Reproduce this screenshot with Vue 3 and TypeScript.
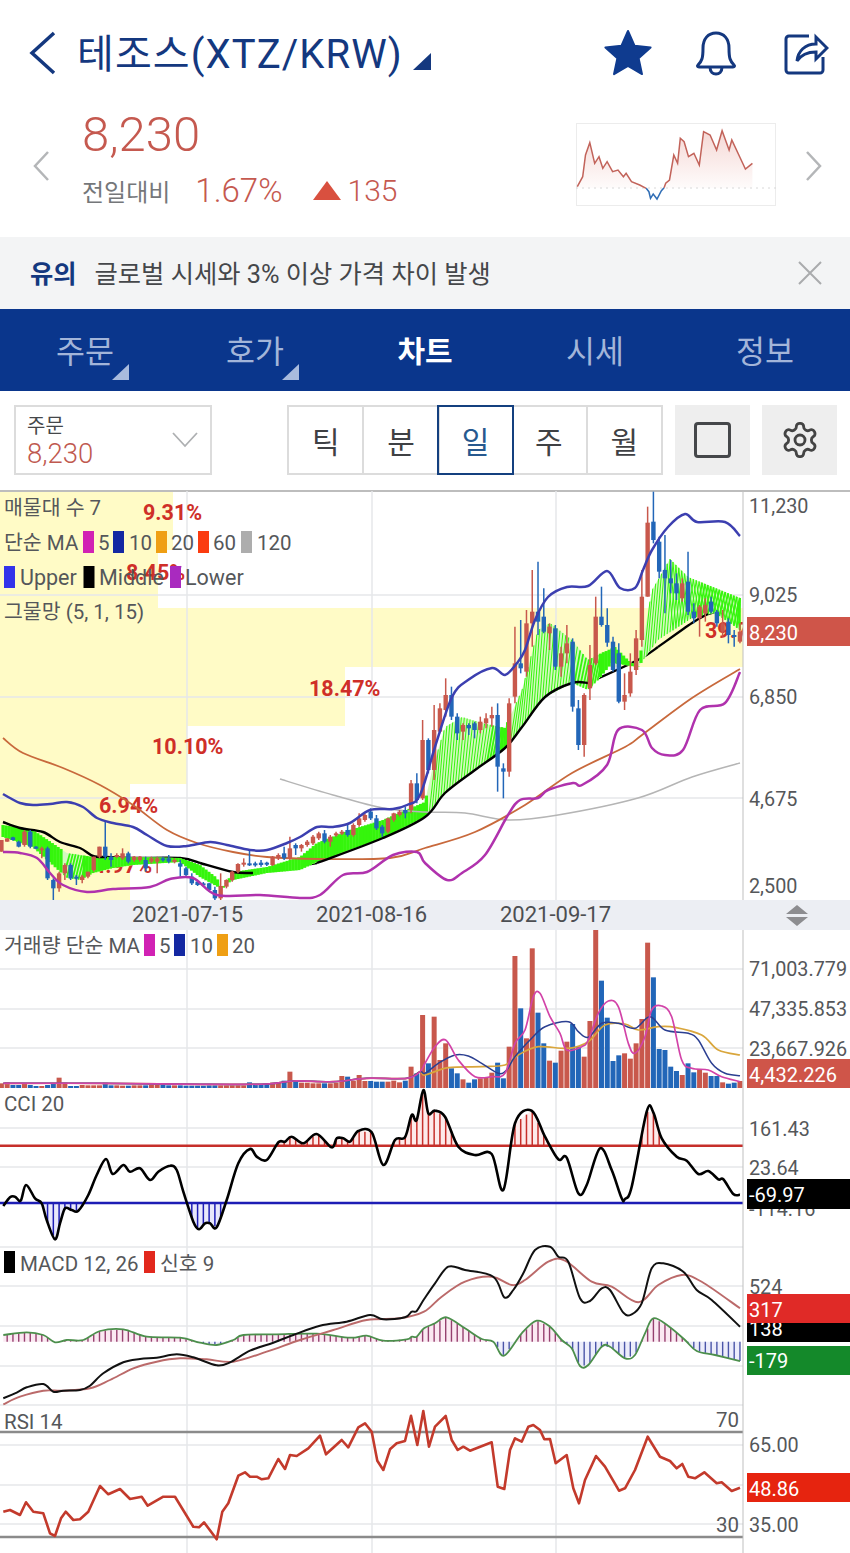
<template>
  <div class="page">
    <header class="topbar">
      <svg class="back" width="30" height="44" viewBox="0 0 30 44"><path d="M26 2 4 22l22 20" /></svg>
      <h1 class="title">테조스(XTZ/KRW)</h1>
      <span class="title-caret"></span>
      <div class="top-icons">
        <svg class="star-icon" width="50" height="48" viewBox="0 0 50 48"><path class="star" d="M25 2l6.600 14.800 16 1.700-12 10.800 3.400 15.800L25 37l-14 8.100 3.400-15.800-12-10.800 16-1.700z" /></svg>
        <svg width="44" height="46" viewBox="0 0 44 46" class="line-icon"><path d="M4 35c4-4 5-7 5-17C9 9 14 3 22 3s13 6 13 15c0 10 1 13 5 17 1 1 .5 2-1 2H5c-1.500 0-2-1-1-2z" /><path d="M16 37c0 5 3 7 6 7s6-2 6-7" /></svg>
        <svg width="46" height="44" viewBox="0 0 46 44" class="line-icon"><path d="M26 5H6a3 3 0 0 0-3 3v31a3 3 0 0 0 3 3h31a3 3 0 0 0 3-3V26" /><path d="M14 30c1-10 8-17 19-17V6l11 11-11 11v-7c-9 0-15 3-19 9z" /></svg>
      </div>
    </header>

    <section class="quote">
      <svg class="side" width="18" height="32" viewBox="0 0 18 32"><path d="M16 2 3 16l13 14" /></svg>
      <div class="quote-main">
        <div class="price">8,230</div>
        <div class="change">
          <span class="change-label">전일대비</span>
          <span class="change-pct">1.67%</span>
          <span class="change-tri"></span>
          <span class="change-num">135</span>
        </div>
      </div>
      <svg class="spark" width="200" height="83" viewBox="576 123 200 83">
        <defs>
          <linearGradient id="sparkFill" x1="0" y1="0" x2="0" y2="1">
            <stop offset="0" stop-color="#e9a9a2" stop-opacity="0.45" />
            <stop offset="1" stop-color="#e9a9a2" stop-opacity="0.04" />
          </linearGradient>
        </defs>
        <rect x="576.500" y="123.500" width="199" height="82" fill="none" stroke="#ececec" />
        <polygon :points="sparkArea" fill="url(#sparkFill)" />
        <line x1="576" y1="188" x2="776" y2="188" stroke="#d8d8d8" stroke-dasharray="2 4" />
        <polyline :points="sparkRedA" class="spark-line" stroke="#c2635a" />
        <polyline :points="sparkBlue" class="spark-line" stroke="#2f6db5" />
        <polyline :points="sparkRedB" class="spark-line" stroke="#c2635a" />
      </svg>
      <svg class="side" width="18" height="32" viewBox="0 0 18 32"><path d="M2 2l13 14L2 30" /></svg>
    </section>

    <section class="notice">
      <strong>유의</strong>
      <span>글로벌 시세와 3% 이상 가격 차이 발생</span>
      <svg width="26" height="26" viewBox="0 0 26 26"><path d="M2 2l22 22M24 2 2 24" /></svg>
    </section>

    <nav class="tabs">
      <div v-for="t in tabs" :key="t.label" class="tab" :class="{ on: t.on }">
        {{ t.label }}
        <i v-if="t.caret"></i>
      </div>
    </nav>

    <section class="tools">
      <div class="select">
        <div>
          <div class="select-label">주문</div>
          <div class="select-val">8,230</div>
        </div>
        <svg width="26" height="16" viewBox="0 0 26 16"><path d="M1 1l12 13L25 1" /></svg>
      </div>
      <div class="periods">
        <div v-for="p in periods" :key="p" class="period" :class="{ on: p === '일' }">{{ p }}</div>
      </div>
      <div class="tool-btn"><span class="square"></span></div>
      <div class="tool-btn">
        <svg width="40" height="40" viewBox="0 0 24 24" fill="none" stroke="#444" stroke-width="1.700">
          <path d="M12.220 2h-.44a2 2 0 0 0-2 2v.18a2 2 0 0 1-1 1.730l-.43.25a2 2 0 0 1-2 0l-.15-.08a2 2 0 0 0-2.730.73l-.22.38a2 2 0 0 0 .73 2.730l.15.1a2 2 0 0 1 1 1.720v.51a2 2 0 0 1-1 1.740l-.15.09a2 2 0 0 0-.73 2.730l.22.38a2 2 0 0 0 2.730.73l.15-.08a2 2 0 0 1 2 0l.43.25a2 2 0 0 1 1 1.730V20a2 2 0 0 0 2 2h.44a2 2 0 0 0 2-2v-.18a2 2 0 0 1 1-1.730l.43-.25a2 2 0 0 1 2 0l.15.08a2 2 0 0 0 2.730-.73l.22-.39a2 2 0 0 0-.73-2.730l-.15-.08a2 2 0 0 1-1-1.740v-.5a2 2 0 0 1 1-1.740l.15-.09a2 2 0 0 0 .73-2.730l-.22-.38a2 2 0 0 0-2.730-.73l-.15.08a2 2 0 0 1-2 0l-.43-.25a2 2 0 0 1-1-1.730V4a2 2 0 0 0-2-2z" />
          <circle cx="12" cy="12" r="3" />
        </svg>
      </div>
    </section>

    <!-- chart is drawn in page coordinates, hence the viewBox offset -->
    <svg class="chart" width="850" height="1063" viewBox="0 490 850 1063">
      <defs>
        <clipPath id="plotClip"><rect x="0" y="490" width="743" height="1063" /></clipPath>
      </defs>

      <rect v-for="b in yellow" :key="b[0]" x="0" :y="b[0]" :width="b[2]" :height="b[1] - b[0]" fill="#fffbc6" />
      <line x1="0" y1="491" x2="850" y2="491" stroke="#bdbdbd" stroke-width="2" />
      <line v-for="y in hGrid" :key="y" x1="0" :y1="y" x2="743" :y2="y" class="grid" />
      <line v-for="x in vGrid" :key="x" :x1="x" y1="491" :x2="x" y2="1553" class="grid" />

      <g clip-path="url(#plotClip)">
        <text v-for="p in pctLabels" :key="p.t" :x="p.x" :y="p.y" class="pct">{{ p.t }}</text>
        <path v-for="(d, i) in midHidden" :key="i" :d="d" class="ln" stroke="#000" stroke-width="2.400" />
        <polygon :points="ribbonArea" fill="#d4f9bf" />
        <line v-for="(r, i) in ribbonLines" :key="i" :x1="r.x1" :y1="r.y1" :x2="r.x2" :y2="r.y2" stroke="#35f50c" :stroke-width="r.w" />
      </g>
      <path :d="ma120" class="ln" stroke="#b5b5b5" stroke-width="1.500" />
      <path :d="ma60" class="ln" stroke="#c8693c" stroke-width="1.800" />
      <path v-for="(d, i) in midShown" :key="i" :d="d" class="ln" stroke="#000" stroke-width="2.400" />
      <g v-for="c in candles" :key="c.x">
        <line :x1="c.x" :y1="c.wt" :x2="c.x" :y2="c.wb" :stroke="c.color" stroke-width="1.500" />
        <rect :x="c.x - 2.200" :y="c.top" width="4.400" :height="c.h" :fill="c.color" />
      </g>
      <path :d="upBand" class="ln" stroke="#3c3fb0" stroke-width="2.500" />
      <path :d="lowBand" class="ln" stroke="#b032ad" stroke-width="2.500" />

      <text x="4" y="515" class="lg">매물대 수 7</text>
      <template v-for="item in mainLegend" :key="item.x">
        <rect v-if="item.c" :x="item.x" :y="item.y - 19" width="11" height="22" :fill="item.c" />
        <text v-else :x="item.x" :y="item.y" class="lg" :class="{ wide: item.wide }">{{ item.t }}</text>
      </template>

      <rect x="0" y="900" width="850" height="30" fill="#eceef3" />
      <text v-for="d in dates" :key="d.t" :x="d.x" y="922" class="date">{{ d.t }}</text>
      <path d="M786 914l11-9 11 9zM786 917l11 9 11-9z" fill="#8d8d90" />

      <!-- volume -->
      <rect v-for="v in volume" :key="v.x" :x="v.x - 2.500" :y="v.top" width="5" :height="1088 - v.top" :fill="v.color" />
      <path :d="volMa20" class="ln" stroke="#d9a63c" stroke-width="1.700" />
      <path :d="volMa10" class="ln" stroke="#2b3f91" stroke-width="1.500" />
      <path :d="volMa5" class="ln" stroke="#d243a8" stroke-width="1.700" />
      <template v-for="item in volLegend" :key="item.x">
        <rect v-if="item.c" :x="item.x" y="934" width="11" height="22" :fill="item.c" />
        <text v-else :x="item.x" y="953" class="lg">{{ item.t }}</text>
      </template>

      <!-- cci -->
      <text x="4" y="1111" class="lg">CCI 20</text>
      <polygon :points="cciUp" fill="#fdeaea" />
      <polygon :points="cciDown" fill="#e8e8fb" />
      <line v-for="h in cciBars" :key="h.x" :x1="h.x" :y1="h.y1" :x2="h.x" :y2="h.y2" :stroke="h.color" stroke-width="1.500" />
      <line x1="0" y1="1145.700" x2="743" y2="1145.700" stroke="#c62f2a" stroke-width="2.400" />
      <line x1="0" y1="1203" x2="743" y2="1203" stroke="#1d1db5" stroke-width="2.400" />
      <path :d="cci" class="ln" stroke="#000" stroke-width="2.600" />

      <!-- macd -->
      <rect x="4" y="1251" width="11" height="22" fill="#000" />
      <text x="20" y="1271" class="lg">MACD 12, 26</text>
      <rect x="144" y="1251" width="11" height="22" fill="#e2281d" />
      <text x="160" y="1271" class="lg">신호 9</text>
      <polygon :points="oscUp" fill="#fbe9f2" />
      <polygon :points="oscDown" fill="#ecedfb" />
      <line v-for="h in oscBars" :key="h.x" :x1="h.x" :y1="h.y1" :x2="h.x" :y2="h.y2" :stroke="h.color" stroke-width="1.400" />
      <path :d="osc" class="ln" stroke="#4c8f4c" stroke-width="1.800" />
      <path :d="signal" class="ln" stroke="#bb6a6a" stroke-width="1.900" />
      <path :d="macd" class="ln" stroke="#111" stroke-width="2" />

      <!-- rsi -->
      <text x="4" y="1429" class="lg">RSI 14</text>
      <line x1="0" y1="1432" x2="743" y2="1432" stroke="#8b8b8b" stroke-width="2.400" />
      <line x1="0" y1="1537" x2="743" y2="1537" stroke="#8b8b8b" stroke-width="2.400" />
      <text x="739" y="1427" class="lg" text-anchor="end">70</text>
      <text x="739" y="1532" class="lg" text-anchor="end">30</text>
      <polyline :points="rsi" class="ln" stroke="#c33a2c" stroke-width="2.600" />

      <!-- price axis -->
      <line x1="743" y1="491" x2="743" y2="900" stroke="#bfbfbf" />
      <line x1="743" y1="930" x2="743" y2="1553" stroke="#bfbfbf" />
      <text v-for="a in axis" :key="a.t" x="749" :y="a.y" class="ax">{{ a.t }}</text>
      <template v-for="tag in tags" :key="tag.t">
        <rect x="747" :y="tag.y" width="103" :height="tag.h" :fill="tag.c" />
        <text x="749" :y="tag.b" class="tag-text">{{ tag.t }}</text>
      </template>
    </svg>
  </div>
</template>

<script setup lang="ts">
type Pt = [number, number]

const tabs = [
  { label: '주문', caret: true },
  { label: '호가', caret: true },
  { label: '차트', on: true },
  { label: '시세' },
  { label: '정보' },
]
const periods = ['틱', '분', '일', '주', '월']

// zoomed-crop coordinates -> page coordinates
const conv = (list: number[][], ox: number, oy: number): Pt[] =>
  list.map(([x, y]) => [ox + x / 3, oy + y / 3] as Pt)
const str = (p: Pt[]) => p.map(([x, y]) => `${x.toFixed(1)},${y.toFixed(1)}`).join(' ')

const smooth = (p: Pt[]) => {
  let d = `M${p[0][0].toFixed(1)} ${p[0][1].toFixed(1)}`
  for (let i = 0; i < p.length - 1; i++) {
    const a = p[Math.max(i - 1, 0)]
    const b = p[i]
    const c = p[i + 1]
    const e = p[Math.min(i + 2, p.length - 1)]
    d += `C${(b[0] + (c[0] - a[0]) / 6).toFixed(1)} ${(b[1] + (c[1] - a[1]) / 6).toFixed(1)} ${(c[0] - (e[0] - b[0]) / 6).toFixed(1)} ${(c[1] - (e[1] - b[1]) / 6).toFixed(1)} ${c[0].toFixed(1)} ${c[1].toFixed(1)}`
  }
  return d
}

const at = (p: Pt[], x: number) => {
  if (x <= p[0][0]) return p[0][1]
  for (let i = 0; i < p.length - 1; i++) {
    if (x <= p[i + 1][0]) {
      const t = (x - p[i][0]) / (p[i + 1][0] - p[i][0] || 1)
      return p[i][1] + (p[i + 1][1] - p[i][1]) * t
    }
  }
  return p[p.length - 1][1]
}

const barX = (i: number) => 1.4 + i * 5.77
const UP = '#c8584c'
const DOWN = '#2266b8'

// sparkline, read off a crop that was squeezed to 1568 wide
const sparkConv = (list: number[][]) => list.map(([x, y]) => [x * (850 / 1568), y / 3] as Pt)
const sp = sparkConv([[1065, 560], [1075, 530], [1080, 465], [1088, 428], [1097, 490], [1105, 470], [1112, 505], [1120, 485], [1130, 515], [1140, 510], [1150, 530], [1155, 520], [1165, 545], [1180, 555], [1192, 565]])
const spB = sparkConv([[1192, 565], [1197, 575], [1200, 595], [1205, 582], [1212, 597], [1220, 572], [1225, 563]])
const spC = sparkConv([[1225, 563], [1228, 550], [1235, 540], [1243, 465], [1250, 490], [1255, 415], [1262, 425], [1270, 470], [1280, 460], [1290, 495], [1298, 395], [1310, 405], [1322, 450], [1332, 392], [1345, 450], [1350, 420], [1370, 490], [1375, 507], [1388, 490]])
const sparkRedA = str(sp)
const sparkBlue = str(spB)
const sparkRedB = str(spC)
const sparkArea = str([[sp[0][0], 188] as Pt, ...sp, ...spC, [spC[spC.length - 1][0], 188] as Pt])

// [bar top y, bottom y, right edge]
const yellow = [
  [491, 550, 173],
  [550, 608, 158],
  [608, 667, 743],
  [667, 726, 345],
  [726, 784, 187],
  [784, 900, 130],
]
const hGrid = [595, 697, 798, 969, 1009, 1048, 1128, 1167, 1247, 1286, 1326, 1366, 1405, 1445, 1485, 1524]
const vGrid = [187, 372, 556]

const pctLabels = [
  { t: '9.31%', x: 143, y: 520 },
  { t: '8.45%', x: 126, y: 580 },
  { t: '18.47%', x: 309, y: 696 },
  { t: '10.10%', x: 152, y: 754 },
  { t: '6.94%', x: 99, y: 813 },
  { t: '4.97%', x: 93, y: 873 },
  { t: '39.77%', x: 705, y: 638 },
]

// mesh ribbon
const ribbonHi: Pt[] = [[3, 825], [33, 830], [67, 853], [93, 857], [113, 857], [133, 857], [180, 858], [200, 865], [217, 878], [222, 890], [233, 872], [267, 867], [300, 857], [317, 843], [350, 830], [383, 820], [425, 802], [432, 770], [445, 727], [462, 717], [482, 723], [505, 728], [522, 690], [538, 630], [550, 623], [572, 640], [588, 660], [602, 653], [615, 647], [628, 660], [638, 667], [652, 590], [670, 559], [688, 577], [740, 598]]
const ribbonLo: Pt[] = [[3, 837], [33, 847], [67, 878], [80, 880], [93, 873], [113, 868], [133, 865], [180, 862], [200, 877], [220, 888], [233, 880], [267, 873], [300, 870], [317, 862], [383, 838], [425, 817], [445, 793], [475, 770], [505, 748], [522, 727], [545, 697], [572, 683], [588, 690], [598, 680], [612, 663], [638, 667], [658, 640], [692, 618], [715, 613], [740, 630]]
const ribbonSample: number[] = []
for (let x = 3; x <= 740; x += 2.9) ribbonSample.push(x)
const ribbonArea = str([
  ...ribbonSample.map((x) => [x, at(ribbonHi, x)] as Pt),
  ...[...ribbonSample].reverse().map((x) => [x, at(ribbonLo, x)] as Pt),
])
const ribbonLines = ribbonSample.flatMap((x) => {
  const y1 = at(ribbonLo, x)
  // narrow stretches read as solid green: straight slices that leave no saw-tooth
  if (Math.abs(y1 - at(ribbonHi, x)) < 24) {
    return [{ x1: x, y1, x2: x, y2: at(ribbonHi, x), w: 3.2 }]
  }
  const x2 = Math.min(x + 6, 740)
  const y2 = at(ribbonHi, x2)
  const line = [{ x1: x, y1, x2, y2, w: Math.abs(y1 - y2) < 36 ? 1.8 : 1 }]
  // the right end of the band is cross-hatched
  if (x > 665) line.push({ x1: x2, y1: at(ribbonLo, x2), x2: x, y2: at(ribbonHi, x), w: 1 })
  return line
})

const upBand = smooth([[3, 794], [10, 798], [20, 803], [33, 805], [50, 804], [67, 802], [83, 807], [97, 818], [113, 823], [133, 827], [147, 835], [167, 846], [187, 846], [210, 842], [227, 845], [250, 850], [267, 850], [287, 843], [300, 837], [317, 827], [333, 827], [350, 823], [370, 810], [393, 809], [407, 805], [420, 795], [435, 747], [452, 697], [468, 680], [492, 668], [505, 675], [517, 663], [525, 650], [535, 620], [548, 597], [567, 587], [588, 586], [607, 571], [620, 588], [635, 588], [643, 570], [652, 550], [668, 527], [685, 514], [697, 522], [725, 522], [740, 536]])
// the black middle band dips under the ribbon for part of its length
const midShown = [
  smooth([[3, 822], [20, 828], [43, 832], [60, 842], [80, 848], [93, 856], [107, 857]]),
  smooth([[200, 863], [233, 872], [253, 873]]),
  smooth([[317, 863], [383, 838], [425, 817], [445, 793], [475, 770], [505, 748], [522, 727], [545, 697], [572, 683], [588, 683]]),
  smooth([[658, 647], [692, 623], [708, 614]]),
]
const midHidden = [
  smooth([[107, 857], [133, 858], [180, 858], [200, 863]]),
  smooth([[253, 873], [317, 863]]),
  smooth([[588, 683], [638, 660], [658, 647]]),
  smooth([[708, 614], [740, 604]]),
]
const lowBand = smooth([[3, 852], [20, 853], [37, 858], [50, 873], [63, 885], [87, 892], [113, 889], [150, 887], [170, 879], [193, 878], [217, 895], [260, 895], [300, 898], [320, 895], [343, 875], [367, 872], [393, 855], [417, 852], [425, 863], [447, 880], [462, 873], [485, 855], [508, 815], [520, 800], [538, 798], [548, 790], [573, 783], [582, 785], [607, 765], [618, 730], [642, 730], [652, 748], [665, 755], [683, 750], [700, 710], [725, 703], [740, 672]])
const ma60 = smooth([[3, 738], [23, 753], [63, 768], [100, 785], [133, 805], [167, 830], [197, 843], [233, 852], [267, 857], [320, 859], [390, 858], [425, 848], [475, 832], [525, 805], [572, 773], [625, 747], [642, 735], [692, 698], [740, 669]])
const ma120 = smooth([[280, 779], [333, 795], [383, 808], [425, 812], [465, 813], [508, 820], [558, 815], [638, 798], [692, 777], [740, 763]])

// [red=1 / blue=0, body top, body bottom, wick top, wick bottom], y in crop pixels from 490
const rawCandles: number[][] = [
  [1, 1050, 1085, 1050, 1085], [1, 1045, 1055, 1045, 1055], [0, 1042, 1050, 1040, 1052], [0, 1055, 1070, 1052, 1072], [1, 1025, 1065, 1020, 1070],
  [0, 1025, 1070, 1020, 1075], [0, 1070, 1075, 1068, 1078], [1, 1075, 1080, 1070, 1105], [0, 1075, 1165, 1070, 1170], [0, 1170, 1195, 1165, 1230],
  [1, 1150, 1195, 1145, 1205], [1, 1125, 1150, 1120, 1170], [0, 1125, 1165, 1120, 1170], [0, 1160, 1165, 1155, 1185], [1, 1160, 1170, 1155, 1180],
  [1, 1145, 1160, 1145, 1165], [1, 1100, 1140, 1100, 1145], [1, 1070, 1100, 1070, 1105], [0, 1070, 1100, 990, 1110], [0, 1100, 1110, 1090, 1130],
  [1, 1095, 1100, 1090, 1105], [1, 1090, 1105, 1075, 1110], [0, 1090, 1115, 1085, 1120], [1, 1100, 1110, 1098, 1115], [1, 1100, 1110, 1098, 1115],
  [0, 1110, 1135, 1100, 1145], [1, 1105, 1115, 1100, 1120], [1, 1105, 1115, 1100, 1150], [0, 1105, 1110, 1100, 1115], [0, 1105, 1115, 1095, 1120],
  [1, 1110, 1115, 1105, 1120], [0, 1120, 1130, 1110, 1160], [0, 1135, 1155, 1130, 1160], [0, 1160, 1180, 1150, 1185], [0, 1175, 1185, 1172, 1188],
  [0, 1180, 1185, 1176, 1190], [0, 1180, 1200, 1178, 1205], [0, 1200, 1225, 1190, 1230], [1, 1188, 1225, 1150, 1230], [1, 1170, 1190, 1168, 1195],
  [1, 1145, 1170, 1143, 1175], [1, 1122, 1145, 1120, 1150], [1, 1118, 1122, 1105, 1130], [0, 1120, 1125, 1080, 1128], [0, 1120, 1125, 1115, 1130],
  [0, 1118, 1125, 1110, 1130], [0, 1118, 1123, 1115, 1128], [1, 1100, 1125, 1098, 1128], [1, 1095, 1105, 1090, 1110], [0, 1090, 1105, 1070, 1110],
  [1, 1075, 1105, 1040, 1110], [0, 1065, 1075, 1060, 1095], [1, 1065, 1075, 1062, 1085], [1, 1055, 1065, 1050, 1070], [1, 1040, 1060, 1035, 1065],
  [1, 1030, 1045, 1025, 1050], [0, 1030, 1055, 1020, 1060], [1, 1040, 1055, 1035, 1070], [1, 1030, 1035, 1025, 1040], [1, 1025, 1030, 1020, 1035],
  [0, 1020, 1035, 1000, 1040], [1, 1005, 1035, 1000, 1040], [1, 985, 1005, 970, 1010], [1, 975, 990, 970, 995], [0, 965, 985, 955, 990],
  [0, 985, 1015, 975, 1020], [0, 1010, 1030, 1005, 1040], [1, 985, 1025, 983, 1030], [1, 970, 990, 968, 995], [1, 965, 975, 960, 980],
  [0, 960, 970, 950, 985], [1, 880, 960, 870, 970], [0, 880, 930, 850, 940], [1, 750, 925, 690, 930],
  [0, 750, 840, 745, 850], [1, 720, 840, 645, 870], [1, 655, 725, 640, 730], [1, 615, 660, 565, 680], [0, 615, 680, 590, 690],
  [0, 680, 730, 670, 750], [1, 705, 725, 700, 750], [0, 705, 715, 700, 735], [0, 700, 720, 695, 745], [1, 695, 720, 680, 730],
  [1, 685, 700, 670, 715], [1, 675, 685, 650, 710], [0, 675, 830, 640, 905], [0, 835, 845, 820, 925], [1, 640, 845, 625, 860],
  [1, 520, 620, 410, 640], [0, 520, 535, 390, 550], [1, 400, 545, 360, 560], [1, 365, 400, 240, 470], [0, 365, 395, 215, 435],
  [0, 380, 425, 295, 430], [1, 410, 430, 400, 480], [0, 415, 530, 405, 540], [1, 490, 530, 470, 560], [1, 460, 490, 405, 520],
  [0, 455, 650, 445, 665], [0, 655, 765, 630, 780], [1, 615, 765, 610, 800], [1, 525, 595, 465, 630], [1, 380, 520, 320, 525],
  [0, 380, 405, 290, 410], [0, 405, 458, 355, 470], [0, 455, 540, 440, 545], [0, 490, 635, 460, 640], [1, 615, 635, 550, 660],
  [1, 545, 610, 490, 620], [1, 445, 540, 420, 555], [1, 320, 450, 240, 470], [1, 98, 320, 50, 320], [0, 95, 150, 5, 160],
  [0, 155, 245, 140, 265], [0, 240, 265, 135, 370], [0, 265, 280, 210, 310], [0, 280, 310, 250, 330], [1, 280, 325, 265, 335],
  [0, 275, 365, 185, 375], [0, 365, 385, 340, 400], [1, 350, 385, 345, 440], [1, 345, 370, 325, 395], [0, 335, 365, 320, 370],
  [0, 365, 400, 360, 410], [1, 400, 425, 360, 440], [0, 395, 435, 385, 460], [0, 435, 440, 420, 470], [1, 425, 455, 400, 460],
]
const candles = rawCandles.map((c, i) => {
  const top = 490 + c[1] / 3
  return {
    x: barX(i),
    color: c[0] ? UP : DOWN,
    top,
    h: Math.max((c[2] - c[1]) / 3, 2),
    wt: 490 + c[3] / 3,
    wb: 490 + c[4] / 3,
  }
})

const mainLegend: { x: number; y: number; t?: string; c?: string; wide?: boolean }[] = [
  { x: 4, y: 550, t: '단순 MA' }, { x: 83, y: 550, c: '#d122b4' }, { x: 98, y: 550, t: '5' },
  { x: 113, y: 550, c: '#1428a2' }, { x: 129, y: 550, t: '10' }, { x: 156, y: 550, c: '#ef9f14' }, { x: 171, y: 550, t: '20' },
  { x: 198, y: 550, c: '#fb3c10' }, { x: 213, y: 550, t: '60' }, { x: 241, y: 550, c: '#adadad' }, { x: 257, y: 550, t: '120' },
  { x: 4, y: 585, c: '#3333ea' }, { x: 20, y: 585, t: 'Upper', wide: true }, { x: 83.500, y: 585, c: '#000' }, { x: 99, y: 585, t: 'Middle', wide: true },
  { x: 170, y: 585, c: '#a92abf' }, { x: 185, y: 585, t: 'Lower', wide: true },
  { x: 4, y: 619, t: '그물망 (5, 1, 15)' },
]
const dates = [
  { t: '2021-07-15', x: 132 },
  { t: '2021-08-16', x: 316 },
  { t: '2021-09-17', x: 500 },
]

// volume bar tops, crop pixels from y=900
const volTops = [
  550, 547, 555, 555, 552, 555, 558, 558, 555, 552, 533, 548, 558, 558, 555, 556, 556, 556, 548, 556,
  556, 557, 557, 556, 556, 556, 555, 555, 555, 556, 556, 556, 557, 557, 557, 557, 556, 556, 556, 556,
  556, 556, 556, 547, 552, 555, 552, 548, 546, 542, 515, 545, 548, 548, 550, 550, 550, 550, 548, 528,
  530, 543, 525, 543, 543, 545, 545, 545, 542, 547, 542, 500, 520, 345, 490, 350, 480, 430, 505, 520,
  538, 548, 538, 535, 532, 518, 488, 535, 440, 168, 325, 415, 145, 338, 430, 482, 488, 452, 425, 372,
  440, 470, 363, 90, 242, 353, 483, 466, 460, 476, 430, 357, 128, 232, 447, 450, 500, 513, 525, 490,
  517, 510, 518, 528, 528, 547, 551, 548, 543,
]
const volume = volTops.map((t, i) => ({ x: barX(i), top: 900 + t / 3, color: rawCandles[i][0] ? UP : DOWN }))

const volLow = (list: number[][]) => [...conv([[10, 550], [300, 550], [600, 553], [800, 552], [880, 543], [1000, 545], [1100, 535], [1220, 535], [1260, 515]], 0, 900), ...conv(list, 425, 900)]
const volMa5 = smooth(volLow([[0, 490], [30, 440], [62, 420], [100, 480], [150, 530], [200, 530], [240, 520], [270, 430], [300, 390], [325, 290], [345, 280], [375, 350], [405, 400], [425, 450], [470, 440], [490, 420], [520, 340], [550, 303], [580, 320], [610, 430], [630, 460], [660, 410], [680, 330], [710, 318], [740, 350], [770, 480], [800, 505], [850, 510], [890, 530], [945, 545]]))
const volMa10 = smooth(volLow([[0, 520], [40, 490], [90, 465], [130, 468], [170, 490], [220, 520], [245, 510], [270, 470], [320, 415], [360, 380], [430, 365], [460, 395], [490, 412], [530, 370], [580, 370], [630, 385], [675, 350], [720, 390], [790, 400], [820, 420], [860, 490], [900, 520], [945, 527]]))
const volMa20 = smooth(volLow([[0, 525], [70, 503], [170, 500], [240, 495], [280, 465], [340, 440], [430, 445], [490, 425], [540, 375], [600, 372], [640, 390], [700, 380], [750, 382], [830, 405], [880, 450], [945, 465]]))
const volLegend = [
  { x: 4, t: '거래량 단순 MA' }, { x: 144, c: '#d122b4' }, { x: 159, t: '5' }, { x: 174, c: '#1428a2' },
  { x: 190, t: '10' }, { x: 217, c: '#ef9f14' }, { x: 232, t: '20' },
]

// cci
const cciPts = [
  ...conv([[10, 918], [30, 892], [45, 890], [62, 902], [78, 855], [105, 895], [125, 910], [140, 960], [165, 1018], [180, 970], [195, 925], [215, 930], [235, 932], [265, 885], [290, 825], [318, 777], [338, 822], [370, 795], [390, 815], [420, 805], [450, 840], [475, 815], [510, 797], [530, 810], [550, 875], [580, 965], [597, 988], [615, 970], [630, 970], [650, 982], [680, 900], [715, 790], [750, 747], [770, 770], [800, 780], [835, 727], [855, 725], [875, 710], [910, 730], [950, 702], [995, 742], [1010, 715], [1030, 715], [1050, 725], [1075, 693], [1115, 697], [1150, 795], [1185, 720], [1215, 712], [1235, 645], [1250, 660], [1270, 570]], 0, 900),
  ...conv([[10, 640], [30, 632], [60, 650], [100, 740], [150, 765], [200, 762], [235, 870], [270, 670], [320, 632], [360, 710], [400, 778], [425, 773], [460, 880], [485, 855], [525, 745], [560, 810], [590, 895], [600, 897], [620, 860], [665, 635], [685, 637], [710, 715], [755, 770], [785, 782], [820, 822], [850, 813], [880, 838], [895, 838], [925, 882], [945, 884]], 425, 900),
]
const cci = smooth(cciPts)

// clip a series to the side of a level and return polygon / hatch bars
const band = (p: Pt[], level: number, above: boolean) => {
  const out: Pt[] = []
  for (let x = p[0][0]; x <= p[p.length - 1][0]; x += 0.5) {
    const y = at(p, x)
    out.push([x, above ? Math.min(y, level) : Math.max(y, level)])
  }
  return str([[p[0][0], level], ...out, [p[p.length - 1][0], level]])
}
const hatch = (p: Pt[], level: number, up: string, down: string, lo = level, hi = level) => {
  const res: { x: number; y1: number; y2: number; color: string }[] = []
  for (let i = 0; i < 129; i++) {
    const x = barX(i)
    if (x < p[0][0]) continue
    const y = at(p, x)
    if (y < hi) res.push({ x, y1: y, y2: hi, color: up })
    else if (y > lo) res.push({ x, y1: lo, y2: y, color: down })
  }
  return res
}
const cciUp = band(cciPts, 1145.7, true)
const cciDown = band(cciPts, 1203, false)
const cciBars = hatch(cciPts, 1145.7, '#c62f2a', '#1d1db5', 1203, 1145.7)

// macd
const macd = smooth([
  ...conv([[10, 475], [50, 458], [80, 442], [130, 432], [160, 455], [190, 452], [240, 450], [270, 437], [310, 400], [370, 367], [420, 357], [470, 353], [530, 343], [580, 352], [650, 376], [690, 367], [750, 332], [820, 308], [880, 285], [960, 257], [1040, 245], [1110, 225], [1150, 238], [1215, 232], [1235, 215], [1250, 213], [1272, 178]], 0, 1240),
  ...conv([[30, 130], [70, 80], [120, 90], [205, 110], [238, 172], [265, 150], [295, 100], [330, 30], [375, 20], [400, 50], [430, 65], [465, 175], [495, 183], [530, 145], [555, 150], [595, 218], [620, 223], [650, 190], [680, 85], [715, 70], [775, 95], [815, 150], [860, 180], [945, 260]], 425, 1240),
])
const signal = smooth([
  ...conv([[10, 493], [60, 470], [130, 452], [190, 452], [270, 445], [330, 420], [400, 385], [470, 365], [540, 355], [620, 358], [700, 365], [800, 335], [900, 300], [1000, 270], [1100, 240], [1200, 235], [1272, 215]], 0, 1240),
  ...conv([[50, 170], [120, 125], [200, 110], [260, 135], [300, 120], [370, 65], [420, 62], [500, 125], [560, 140], [640, 187], [700, 135], [770, 105], [830, 125], [945, 205]], 425, 1240),
])
const oscPts = [
  ...conv([[10, 285], [80, 277], [130, 285], [165, 307], [200, 300], [250, 300], [300, 273], [370, 268], [440, 290], [540, 293], [600, 308], [650, 315], [700, 300], [730, 285], [830, 283], [950, 281], [1050, 293], [1100, 287], [1150, 302], [1220, 298], [1235, 290], [1250, 290], [1272, 265]], 0, 1240),
  ...conv([[30, 250], [65, 232], [120, 265], [170, 297], [205, 305], [237, 347], [290, 280], [335, 242], [375, 260], [410, 300], [440, 325], [465, 378], [490, 375], [530, 320], [555, 320], [600, 355], [630, 345], [660, 280], [685, 235], [730, 258], [780, 300], [815, 333], [870, 345], [945, 363]], 425, 1240),
]
const osc = smooth(oscPts)
const oscUp = band(oscPts, 1341.7, true)
const oscDown = band(oscPts, 1341.7, false)
const oscBars = hatch(oscPts, 1341.7, '#95406f', '#4a55a8')

// rsi
const rsi = str([
  ...conv([[10, 815], [30, 810], [60, 825], [78, 787], [100, 815], [130, 820], [150, 880], [165, 888], [183, 835], [197, 815], [220, 840], [240, 838], [265, 815], [300, 738], [325, 763], [360, 747], [390, 777], [425, 770], [443, 797], [490, 770], [525, 770], [580, 860], [597, 862], [612, 847], [650, 898], [667, 815], [685, 790], [715, 707], [735, 697], [750, 710], [770, 710], [785, 718], [805, 715], [835, 657], [855, 687], [870, 645], [890, 648], [925, 625], [960, 587], [978, 643], [1025, 600], [1045, 622], [1075, 562], [1095, 550], [1115, 575], [1132, 662], [1150, 690], [1170, 628], [1190, 610], [1215, 603], [1233, 527], [1252, 615], [1270, 513]], 0, 1240),
  ...conv([[12, 620], [30, 560], [62, 528], [80, 600], [98, 630], [115, 620], [135, 632], [200, 607], [218, 740], [238, 747], [255, 630], [270, 595], [290, 605], [310, 560], [325, 555], [345, 570], [358, 598], [375, 597], [392, 670], [425, 645], [445, 745], [462, 790], [480, 720], [513, 648], [540, 680], [582, 752], [600, 745], [630, 690], [668, 590], [705, 650], [735, 663], [755, 685], [772, 672], [790, 710], [810, 715], [838, 697], [875, 730], [890, 727], [920, 753], [945, 743]], 425, 1240),
])

const axis = [
  { t: '11,230', y: 513 }, { t: '9,025', y: 602 }, { t: '6,850', y: 704 }, { t: '4,675', y: 806 }, { t: '2,500', y: 893 },
  { t: '71,003.779', y: 976 }, { t: '47,335.853', y: 1016 }, { t: '23,667.926', y: 1056 },
  { t: '161.43', y: 1136 }, { t: '23.64', y: 1175 }, { t: '-114.16', y: 1216 },
  { t: '524', y: 1294 }, { t: '65.00', y: 1452 }, { t: '35.00', y: 1532 },
]
const tags = [
  { t: '8,230', y: 617, h: 29, b: 640, c: '#cf5549' },
  { t: '4,432.226', y: 1059, h: 29, b: 1082, c: '#cf5549' },
  { t: '-69.97', y: 1179, h: 30, b: 1202, c: '#000' },
  { t: '138', y: 1323, h: 19, b: 1336, c: '#000' },
  { t: '317', y: 1294, h: 29, b: 1317, c: '#e02a27' },
  { t: '-179', y: 1346, h: 29, b: 1368, c: '#14892a' },
  { t: '48.86', y: 1473, h: 29, b: 1496, c: '#e6240f' },
]
</script>

<style>
body {
  background: #fff;
}
</style>

<style scoped>
.page {
  width: 850px;
  font-family: Roboto, 'Noto Sans CJK KR', sans-serif;
  font-weight: 300;
  background: #fff;
  overflow: hidden;
}
.topbar {
  height: 110px;
  display: flex;
  align-items: center;
  padding: 0 21px 4px 28px;
  box-sizing: border-box;
}
.back {
  fill: none;
  stroke: #14387f;
  stroke-width: 3.500;
}
.title {
  margin: 0 0 0 19px;
  font-size: 40px;
  font-weight: 400;
  letter-spacing: 1.100px;
  color: #14387f;
  line-height: 1;
  padding-top: 4px;
}
.title-caret {
  width: 0;
  height: 0;
  margin: 16px 0 0 10px;
  border-left: 18px solid transparent;
  border-bottom: 17px solid #14387f;
}
.top-icons {
  margin-left: auto;
  display: flex;
  align-items: center;
  gap: 45px;
}
.star-icon {
  margin-right: -4px;
}
.star {
  fill: #0f3b8f;
  stroke: #0f3b8f;
  stroke-width: 2;
  stroke-linejoin: round;
}
.line-icon {
  fill: none;
  stroke: #14387f;
  stroke-width: 3;
}
.quote {
  height: 127px;
  display: flex;
  align-items: center;
  padding: 0 27px 15px 32px;
  box-sizing: border-box;
}
.side {
  fill: none;
  stroke: #b4b6b8;
  stroke-width: 2.500;
  flex: none;
}
.quote-main {
  margin: -10px 0 0 32px;
  flex: 1;
}
.price {
  font-size: 49px;
  line-height: 46px;
  color: #c5594f;
}
.change {
  display: flex;
  align-items: center;
  height: 40px;
  margin-top: 12px;
}
.change-label {
  font-size: 24px;
  color: #75777a;
  font-weight: 400;
}
.change-pct {
  font-size: 33px;
  color: #c5594f;
  margin-left: 25px;
}
.change-tri {
  width: 0;
  height: 0;
  margin-left: 30px;
  border-left: 14px solid transparent;
  border-right: 14px solid transparent;
  border-bottom: 19px solid #d9503f;
}
.change-num {
  font-size: 30px;
  color: #c5594f;
  margin-left: 7px;
}
.spark {
  display: block;
  flex: none;
  margin: -4px 29px 0 0;
}
.spark-line {
  fill: none;
  stroke-width: 1.500;
}
.notice {
  height: 72px;
  background: #f3f4f5;
  display: flex;
  align-items: center;
  padding: 0 27px 3px 30px;
  box-sizing: border-box;
  font-size: 25.300px;
  color: #45474a;
  font-weight: 400;
}
.notice strong {
  color: #14387f;
  font-weight: 700;
  margin-right: 18px;
}
.notice svg {
  margin: 3px 0 0 auto;
  fill: none;
  stroke: #a9abad;
  stroke-width: 2;
}
.tabs {
  height: 82px;
  background: #0a368c;
  display: grid;
  grid-template-columns: repeat(5, 170px);
}
.tab {
  position: relative;
  display: flex;
  align-items: center;
  justify-content: center;
  font-size: 31.500px;
  color: #a3b5d9;
  padding-bottom: 2px;
  font-weight: 400;
}
.tab.on {
  color: #fff;
  font-weight: 700;
  font-size: 30px;
}
.tab i {
  position: absolute;
  left: 112px;
  top: 55px;
  border-left: 17px solid transparent;
  border-bottom: 16px solid #a9bbdd;
}
.tools {
  height: 99px;
  box-sizing: border-box;
  display: flex;
  align-items: flex-start;
  padding: 14px 13px 0 14px;
}
.select {
  width: 198px;
  height: 70px;
  box-sizing: border-box;
  border: 2px solid #dcdcdc;
  display: flex;
  align-items: center;
  justify-content: space-between;
  padding: 5px 12px 0 11px;
}
.select svg {
  fill: none;
  stroke: #aeb0b2;
  stroke-width: 1.800;
  margin-top: -6px;
}
.select-label {
  font-size: 20px;
  line-height: 22px;
  color: #45474a;
  font-weight: 400;
}
.select-val {
  font-size: 27.500px;
  line-height: 33px;
  color: #c0594f;
}
.periods {
  margin-left: 75px;
  width: 376px;
  height: 70px;
  box-sizing: border-box;
  border: 2px solid #dcdcdc;
  display: flex;
}
.period {
  flex: 1;
  display: flex;
  align-items: center;
  justify-content: center;
  font-size: 30px;
  color: #3f4144;
  font-weight: 400;
  border-right: 2px solid #dcdcdc;
}
.period:last-child {
  border-right: 0;
}
.period.on {
  color: #27598f;
  outline: 2px solid #14407f;
  outline-offset: 0;
  z-index: 1;
  border-right: 0;
  margin-left: -1px;
}
.tool-btn {
  margin-left: 12px;
  width: 75px;
  height: 70px;
  background: #eeeeee;
  display: flex;
  align-items: center;
  justify-content: center;
}
.square {
  width: 37px;
  height: 36px;
  box-sizing: border-box;
  border: 3px solid #45474a;
  border-radius: 4px;
}
.chart {
  display: block;
}
.grid {
  stroke: #e6e7ea;
  stroke-width: 1.500;
}
.ln {
  fill: none;
  stroke-linejoin: round;
}
.pct {
  font-size: 21.500px;
  font-weight: 700;
  fill: #cf2f28;
}
.lg {
  font-size: 20.500px;
  fill: #55575a;
  font-weight: 400;
}
.lg.wide {
  font-size: 21.500px;
}
.ax {
  font-size: 19.800px;
  fill: #55575a;
  font-weight: 400;
}
.date {
  font-size: 22px;
  fill: #4c4e52;
  font-weight: 400;
}
.tag-text {
  font-size: 20px;
  fill: #fff;
  font-weight: 400;
}
</style>
